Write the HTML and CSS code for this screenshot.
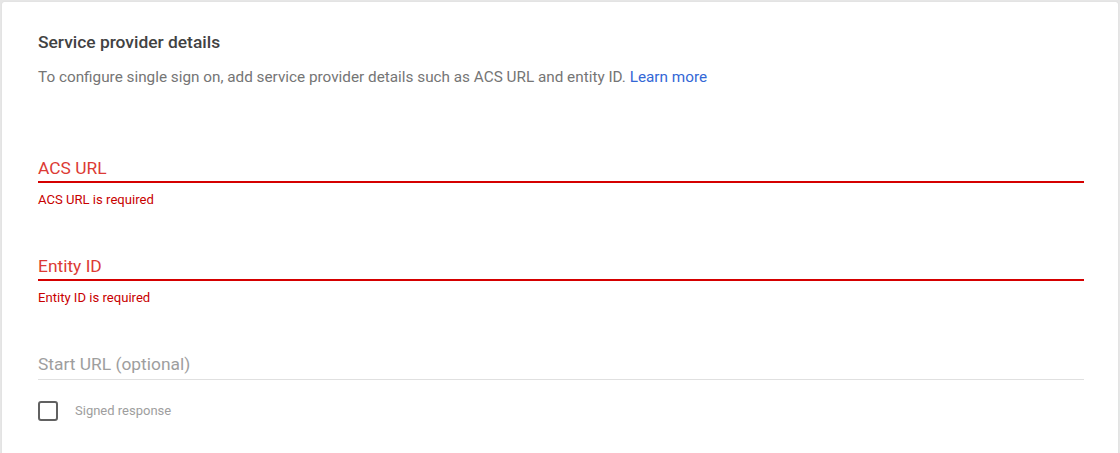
FILE: index.html
```html
<!DOCTYPE html>
<html lang="en">
<head>
<meta charset="utf-8">
<title>Service provider details</title>
<link rel="stylesheet" href="styles.css">
</head>
<body>
<div class="page">
  <section class="card">
    <h2 class="title">Service provider details</h2>
    <p class="desc">To configure single sign on, add service provider details such as ACS URL and entity ID. <a class="link" href="#">Learn more</a></p>

    <div class="field field-error field-first">
      <div class="input">ACS URL</div>
      <div class="hint">ACS URL is required</div>
    </div>

    <div class="field field-error">
      <div class="input">Entity ID</div>
      <div class="hint">Entity ID is required</div>
    </div>

    <div class="field field-plain">
      <div class="input">Start URL (optional)</div>
    </div>

    <label class="check">
      <span class="box"></span>
      <span class="check-label">Signed response</span>
    </label>
  </section>
</div>
</body>
</html>
```

FILE: styles.css
```css
html, body {
  margin: 0;
  padding: 0;
  height: 100%;
  background: #e6e6e6;
  font-family: Roboto, "Noto Sans", "Liberation Sans", sans-serif;
}

.page {
  padding: 2px 2px 0 2px;
  height: 100%;
  box-sizing: border-box;
}

.card {
  background: #fff;
  border-radius: 2px 2px 0 0;
  height: 100%;
  box-sizing: border-box;
  padding: 30px 34px 0 36px;
  box-shadow: 0 0 1px rgba(0,0,0,0.15);
}

.title {
  margin: 0;
  font-size: 17.4px;
  font-weight: 500;
  line-height: 20px;
  color: #424242;
}

.desc {
  margin: 15px 0 0 0;
  font-size: 15.3px;
  line-height: 20px;
  color: #757575;
}

.link {
  color: #3367d6;
  text-decoration: none;
}

.field {
  margin-top: 47px;
}

.field-first {
  margin-top: 70px;
}

.input {
  font-size: 17.4px;
  line-height: 22px;
  padding-bottom: 2px;
}

.field-error .input {
  color: #dc3a34;
  border-bottom: 2px solid #d50000;
}

.field-plain .input {
  color: #9e9e9e;
  padding-bottom: 4px;
  border-bottom: 1px solid #e0e0e0;
}

.hint {
  margin-top: 9px;
  font-size: 13.1px;
  line-height: 16px;
  color: #c80000;
}

.check {
  display: flex;
  align-items: center;
  margin-top: 21px;
  height: 20px;
}

.box {
  width: 20px;
  height: 20px;
  box-sizing: border-box;
  border: 2px solid #616161;
  border-radius: 3px;
}

.check-label {
  margin-left: 17px;
  font-size: 13px;
  line-height: 16px;
  color: #9e9e9e;
}
```
